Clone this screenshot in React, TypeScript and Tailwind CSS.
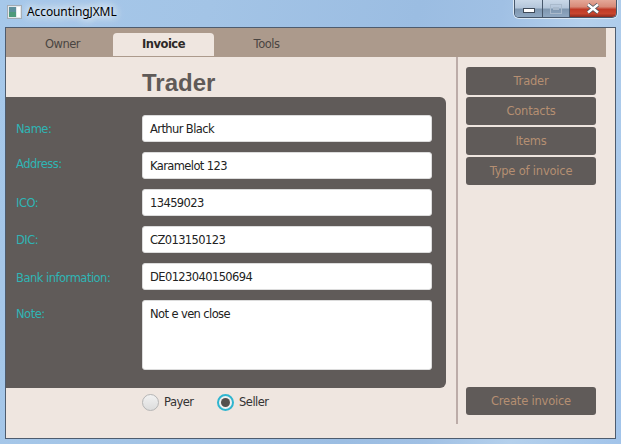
const fields = [
  { label: 'Name:', value: 'Arthur Black', labelClass: 'pt-[6px]' },
  { label: 'Address:', value: 'Karamelot 123', labelClass: 'pt-[4px]' },
  { label: 'ICO:', value: '13459023', labelClass: 'pt-[6px]' },
  { label: 'DIC:', value: 'CZ013150123', labelClass: 'pt-[6px]' },
  { label: 'Bank information:', value: 'DE0123040150694', labelClass: 'pt-[7px]' },
];

const sideButtons = ['Trader', 'Contacts', 'Items', 'Type of invoice'];

function SideButton({ label }: { label: string }) {
  return (
    <div className="h-[28px] w-[130px] pt-[2px] rounded-[3px] bg-[#605b59] flex items-center justify-center tracking-[-0.2px] text-[#b58f72]">
      {label}
    </div>
  );
}

export default function App() {
  return (
    <div className="w-[621px] h-[444px] overflow-hidden flex flex-col bg-[linear-gradient(100deg,#a6c8ea_0%,#a3c4e6_30%,#9bbde2_60%,#a0c0e4_72%,#b4d0ec_84%,#a2c4ea_100%)] font-['DejaVu_Sans',sans-serif] text-[11.5px] tracking-[-0.5px]">
      {/* title bar */}
      <div className="h-[27px] flex shrink-0 pl-[7px] pr-[4px] justify-between">
        <div className="flex items-center gap-[5px] pb-[3px]">
          <svg width="15" height="14" viewBox="0 0 15 14">
            <rect x="0.5" y="0.5" width="14" height="13" fill="#e4e8ec" stroke="#a2abb4" />
            <rect x="2" y="2" width="7" height="5" fill="#5d8f9c" />
            <rect x="2" y="7" width="7" height="5" fill="#4f9a7a" />
            <rect x="10" y="2" width="3" height="10" fill="#ffffff" />
          </svg>
          <span className="text-[12px] tracking-[-0.1px] text-black font-['Noto_Sans',sans-serif] [text-shadow:0_0_8px_#fff,0_0_10px_#fff,0_0_14px_#fff]">AccountingJXML</span>
        </div>
        <div className="flex h-[18px] w-[103px] rounded-b-[5px] overflow-hidden border border-t-0 border-[#47586c] shadow-[0_0_0_1px_#dbe8f4]">
          <div className="w-[28px] bg-[linear-gradient(#c9d8e8_0%,#b4c6da_45%,#7f97b0_55%,#8fa8c2_100%)] flex items-center justify-center pt-[3px] border-r border-[#47586c]">
            <div className="w-[12px] h-[5px] bg-white border border-[#3f4a58]" />
          </div>
          <div className="w-[27px] bg-[linear-gradient(#c9d8e8_0%,#b4c6da_45%,#7f97b0_55%,#8fa8c2_100%)] flex items-center justify-center border-r border-[#47586c]">
            <div className="w-[12px] h-[10px] border border-[#a9bacc] flex items-center justify-center">
              <div className="w-[6px] h-[3px] bg-[#a9bacc]" />
            </div>
          </div>
          <div className="flex-1 bg-[linear-gradient(#e4a898_0%,#d88a78_40%,#c03a26_55%,#c8452e_80%,#8a2a1e_100%)] flex items-center justify-center">
            <svg width="16" height="11" viewBox="0 0 16 11">
              <path d="M3 1.5 L13 9.5 M13 1.5 L3 9.5" stroke="#4a5560" strokeWidth="4" />
              <path d="M3 1.5 L13 9.5 M13 1.5 L3 9.5" stroke="#ffffff" strokeWidth="2.4" />
            </svg>
          </div>
        </div>
      </div>

      {/* client area */}
      <div className="h-[412px] w-[611px] ml-[5px] border border-[#4e5c6e] bg-[#efe6e0] flex flex-col shrink-0">
        {/* tabs */}
        <div className="h-[29px] w-[600px] shrink-0 bg-[#ac9a8c] flex pl-[6px] pt-[5px]">
          <div className="w-[101px] h-[23px] flex items-center justify-center text-[#4a4542]">Owner</div>
          <div className="w-[101px] h-[23px] flex items-center justify-center rounded-t-[4px] bg-[#efe6e0] font-bold text-[#2e2a28]">Invoice</div>
          <div className="w-[105px] h-[23px] flex items-center justify-center text-[#4a4542]">Tools</div>
        </div>

        <div className="flex flex-1">
          {/* main column */}
          <div className="w-[452px] shrink-0 border-r-[2px] border-[#bcaca8] h-[367px] flex flex-col">
            <div className="h-[40px] pl-[136px] pt-[9px] text-[24px] tracking-normal leading-[33px] font-bold text-[#5f5a58] font-['Liberation_Sans',sans-serif]">
              Trader
            </div>
            <div className="w-[440px] h-[291px] rounded-r-[6px] bg-[#605b59] pt-[18px] pl-[10px] flex flex-col gap-[10px]">
              {fields.map((f) => (
                <div key={f.label} className="flex h-[27px]">
                  <div className={`w-[126px] text-[#2fb5b5] ${f.labelClass}`}>{f.label}</div>
                  <div className="w-[290px] h-[27px] rounded-[3px] bg-white border border-[#dcdcdc] pl-[7px] pt-[3px] flex items-center tracking-[-0.6px] text-[#222222]">
                    {f.value}
                  </div>
                </div>
              ))}
              <div className="flex h-[70px]">
                <div className="w-[126px] text-[#2fb5b5] pt-[6px]">Note:</div>
                <div className="w-[290px] h-[70px] rounded-[3px] bg-white border border-[#dcdcdc] px-[7px] pt-[5px] tracking-[-0.6px] text-[#222222]">
                  Not e ven close
                </div>
              </div>
            </div>
            <div className="flex pl-[136px] pt-[6px] items-center text-[#333333]">
              <div className="flex items-center gap-[5px] w-[75px]">
                <div className="w-[17px] h-[17px] rounded-full border border-[#b5b5b5] bg-gradient-to-b from-[#f2f2f2] to-[#dcdcdc]" />
                Payer
              </div>
              <div className="flex items-center gap-[5px]">
                <div className="w-[17px] h-[17px] rounded-full border-[2px] border-[#2fb5cf] bg-[#f0f0f0] flex items-center justify-center">
                  <div className="w-[9px] h-[9px] rounded-full bg-[#55504e]" />
                </div>
                Seller
              </div>
            </div>
          </div>

          {/* side column */}
          <div className="pl-[8px] pt-[10px] flex flex-col h-[367px] justify-between">
            <div className="flex flex-col gap-[2px]">
              {sideButtons.map((b) => (
                <SideButton key={b} label={b} />
              ))}
            </div>
            <div className="mb-[9px]">
              <SideButton label="Create invoice" />
            </div>
          </div>
        </div>
      </div>
    </div>
  );
}
